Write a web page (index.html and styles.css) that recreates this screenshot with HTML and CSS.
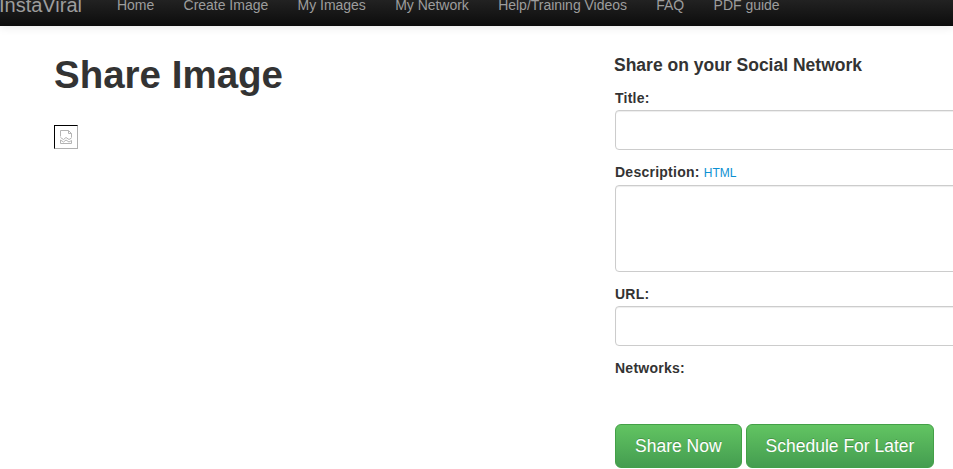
FILE: index.html
```html
<!DOCTYPE html>
<html lang="en">
<head>
<meta charset="utf-8">
<title>Share Image</title>
<link rel="stylesheet" href="styles.css">
</head>
<body>
<nav class="navbar">
  <a class="brand" href="#">InstaViral</a>
  <ul class="nav-list">
    <li><a href="#">Home</a></li>
    <li><a href="#">Create Image</a></li>
    <li><a href="#">My Images</a></li>
    <li><a href="#">My Network</a></li>
    <li><a href="#">Help/Training Videos</a></li>
    <li><a href="#">FAQ</a></li>
    <li><a href="#">PDF guide</a></li>
  </ul>
</nav>
<main class="content">
  <section class="preview">
    <h1 class="page-title">Share Image</h1>
    <div class="broken-image">
      <svg width="16" height="16" viewBox="0 0 16 16" fill="none" stroke="#b4b4b4" stroke-width="1">
        <path d="M2.5 7.5V1.5H10.5L13.5 4.5V8.5"/>
        <path d="M10.5 1.5V4.5H13.5"/>
        <path d="M2.5 8.5L5.5 10.5L8 8.5L11 10.5L13.5 9"/>
        <path d="M2.5 11V14.5H13.5V11.5L11 13L8 11L5.5 13Z"/>
      </svg>
    </div>
  </section>
  <section class="share-panel">
    <h2 class="share-title">Share on your Social Network</h2>
    <form class="share-form">
      <label class="field-label">Title:</label>
      <input class="field-input" type="text">
      <label class="field-label">Description: <a class="html-link" href="#">HTML</a></label>
      <textarea class="field-input field-area"></textarea>
      <label class="field-label">URL:</label>
      <input class="field-input" type="text">
      <label class="field-label">Networks:</label>
      <div class="actions">
        <button class="btn" type="button">Share Now</button>
        <button class="btn" type="button">Schedule For Later</button>
      </div>
    </form>
  </section>
</main>
</body>
</html>
```

FILE: styles.css
```css
html, body {
  margin: 0;
  height: 100%;
  overflow: hidden;
  background: #fff;
}
body {
  font-family: "Liberation Sans", Arial, sans-serif;
  font-size: 14px;
  color: #333;
}
.navbar {
  display: flex;
  align-items: flex-start;
  height: 26px;
  overflow: hidden;
  background: linear-gradient(to bottom, #222, #0c0c0c);
  box-shadow: 0 1px 10px rgba(0, 0, 0, 0.1);
  position: relative;
}
.brand {
  font-size: 20px;
  line-height: 20px;
  margin: -5px 0 0 -1px;
  color: #9d9d9d;
  text-decoration: none;
  width: 118px;
  flex: none;
}
.nav-list {
  display: flex;
  gap: 29.33px;
  list-style: none;
  margin: -5px 0 0;
  padding: 0;
}
.nav-list a {
  font-size: 14px;
  line-height: 20px;
  letter-spacing: -0.02px;
  color: #9d9d9d;
  text-decoration: none;
}
.content {
  display: flex;
}
.preview {
  width: 561px;
  flex: none;
  padding-left: 54px;
  box-sizing: content-box;
}
.page-title {
  font-size: 38.5px;
  line-height: 40px;
  font-weight: bold;
  margin: 29px 0 30px;
  color: #333;
}
.broken-image {
  width: 22px;
  height: 22px;
  border: 1px solid #b0b0b0;
  border-top-color: #000;
  border-left-color: #000;
  display: flex;
  align-items: center;
  justify-content: center;
}
.share-panel {
  width: 338px;
  flex: none;
}
.share-title {
  font-size: 17.5px;
  line-height: 20px;
  font-weight: bold;
  margin: 29px 0 0 -1px;
}
.share-form {
  display: flex;
  flex-direction: column;
  align-items: flex-start;
  margin-top: 13px;
}
.field-label {
  font-weight: bold;
  font-size: 14px;
  line-height: 20px;
  letter-spacing: 0.25px;
  margin-bottom: 2px;
}
.html-link {
  font-weight: normal;
  font-size: 12px;
  letter-spacing: 0;
  color: #0e90d2;
  text-decoration: none;
}
.field-input {
  display: block;
  box-sizing: border-box;
  width: 400px;
  height: 40px;
  margin: 0 0 12px;
  padding: 6px 12px;
  border: 1px solid #ccc;
  border-radius: 4px;
  background: #fff;
  box-shadow: inset 0 1px 1px rgba(0, 0, 0, 0.075);
  resize: none;
}
.field-area {
  height: 87px;
}
.actions {
  display: flex;
  gap: 4px;
  margin-top: 44px;
}
.btn {
  height: 44px;
  padding: 0 19px;
  font-family: inherit;
  font-size: 17.5px;
  color: #fff;
  border: 1px solid #43a047;
  border-radius: 6px;
  background: linear-gradient(to bottom, #62c462, #449d50);
  text-shadow: 0 -1px 0 rgba(0, 0, 0, 0.2);
}
```
